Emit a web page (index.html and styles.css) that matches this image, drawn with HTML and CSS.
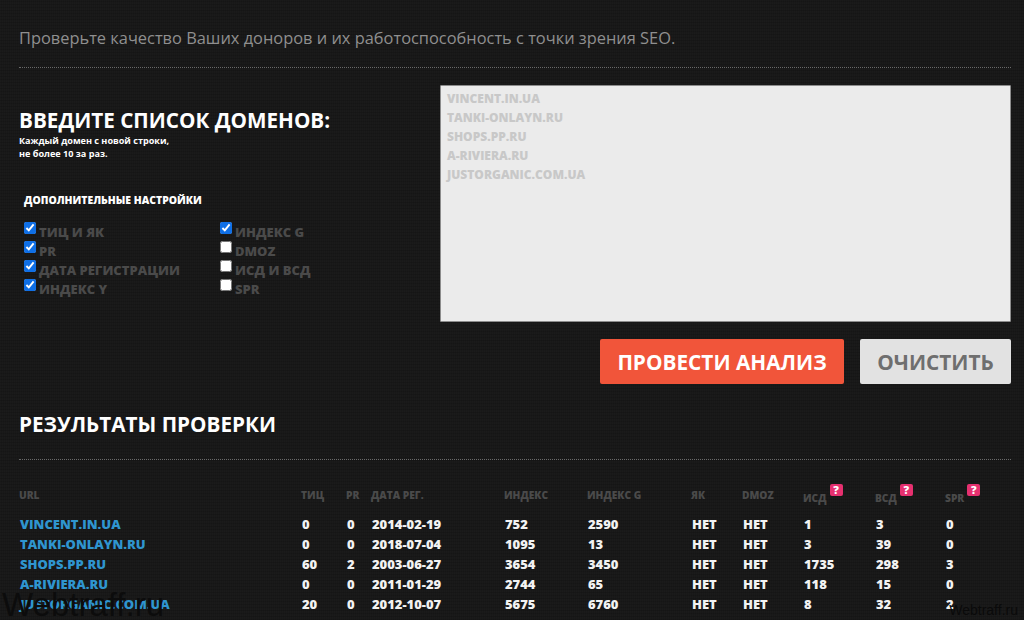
FILE: index.html
```html
<!DOCTYPE html>
<html lang="ru">
<head>
<meta charset="utf-8">
<title>Проверка доноров</title>
<link rel="stylesheet" href="styles.css">
</head>
<body>
<main class="page">
  <p class="lead">Проверьте качество Ваших доноров и их работоспособность с точки зрения SEO.</p>
  <section class="form">
    <div class="options">
      <h2 class="title">ВВЕДИТЕ СПИСОК ДОМЕНОВ:</h2>
      <p class="hint">Каждый домен с новой строки,<br>не более 10 за раз.</p>
      <h3 class="subtitle">ДОПОЛНИТЕЛЬНЫЕ НАСТРОЙКИ</h3>
      <div class="checks">
        <label class="check"><input type="checkbox" checked>ТИЦ И ЯК</label>
        <label class="check"><input type="checkbox" checked>ИНДЕКС G</label>
        <label class="check"><input type="checkbox" checked>PR</label>
        <label class="check"><input type="checkbox">DMOZ</label>
        <label class="check"><input type="checkbox" checked>ДАТА РЕГИСТРАЦИИ</label>
        <label class="check"><input type="checkbox">ИСД И ВСД</label>
        <label class="check"><input type="checkbox" checked>ИНДЕКС Y</label>
        <label class="check"><input type="checkbox">SPR</label>
      </div>
    </div>
    <div class="entry">
      <textarea class="domains" placeholder="VINCENT.IN.UA&#10;TANKI-ONLAYN.RU&#10;SHOPS.PP.RU&#10;A-RIVIERA.RU&#10;JUSTORGANIC.COM.UA"></textarea>
      <div class="actions">
        <button class="btn btn-go" type="button">ПРОВЕСТИ АНАЛИЗ</button>
        <button class="btn btn-clear" type="button">ОЧИСТИТЬ</button>
      </div>
    </div>
  </section>
  <h2 class="results-title">РЕЗУЛЬТАТЫ ПРОВЕРКИ</h2>
  <table class="results">
    <colgroup>
      <col class="c-url"><col class="c-tic"><col class="c-pr"><col class="c-date"><col class="c-iy"><col class="c-ig"><col class="c-ya"><col class="c-dm"><col class="c-isd"><col class="c-vsd"><col class="c-spr">
    </colgroup>
    <thead>
      <tr>
        <th>URL</th><th>ТИЦ</th><th>PR</th><th>ДАТА РЕГ.</th><th>ИНДЕКС</th><th>ИНДЕКС G</th><th>ЯК</th><th>DMOZ</th>
        <th class="low">ИСД<span class="q">?</span></th>
        <th class="low">ВСД<span class="q">?</span></th>
        <th class="low">SPR<span class="q">?</span></th>
      </tr>
    </thead>
    <tbody>
      <tr><td><a href="#">VINCENT.IN.UA</a></td><td>0</td><td>0</td><td>2014-02-19</td><td>752</td><td>2590</td><td>НЕТ</td><td>НЕТ</td><td>1</td><td>3</td><td>0</td></tr>
      <tr><td><a href="#">TANKI-ONLAYN.RU</a></td><td>0</td><td>0</td><td>2018-07-04</td><td>1095</td><td>13</td><td>НЕТ</td><td>НЕТ</td><td>3</td><td>39</td><td>0</td></tr>
      <tr><td><a href="#">SHOPS.PP.RU</a></td><td>60</td><td>2</td><td>2003-06-27</td><td>3654</td><td>3450</td><td>НЕТ</td><td>НЕТ</td><td>1735</td><td>298</td><td>3</td></tr>
      <tr><td><a href="#">A-RIVIERA.RU</a></td><td>0</td><td>0</td><td>2011-01-29</td><td>2744</td><td>65</td><td>НЕТ</td><td>НЕТ</td><td>118</td><td>15</td><td>0</td></tr>
      <tr><td><a href="#">JUSTORGANIC.COM.UA</a></td><td>20</td><td>0</td><td>2012-10-07</td><td>5675</td><td>6760</td><td>НЕТ</td><td>НЕТ</td><td>8</td><td>32</td><td>2</td></tr>
    </tbody>
  </table>
</main>
<div class="mark-left">Webtraff.ru</div>
<div class="mark-right">Webtraff.ru</div>
</body>
</html>
```

FILE: styles.css
```css
html, body {
  margin: 0;
  height: 620px;
  overflow: hidden;
}
body {
  position: relative;
  font-family: "Open Sans", sans-serif;
  color: #fff;
  background-color: #181818;
  background-image:
    repeating-linear-gradient(0deg, rgba(0,0,0,.12) 0 1px, transparent 1px 3px),
    repeating-linear-gradient(90deg, rgba(255,255,255,.012) 0 1px, transparent 1px 2px);
}
.page {
  padding: 0 13px 0 19px;
}
.lead {
  margin: 0;
  padding: 27px 0 18px;
  height: 22px;
  line-height: 22px;
  font-size: 16.4px;
  color: #8f8f8f;
  border-bottom: 1px dotted #6a6a6a;
}
.form {
  display: flex;
  justify-content: space-between;
  padding-top: 17px;
}
.options {
  width: 421px;
  padding-top: 21px;
}
.title {
  margin: 0;
  font-size: 20.7px;
  line-height: 28px;
  font-weight: 700;
}
.hint {
  margin: 0;
  font-size: 9.1px;
  line-height: 13px;
  font-weight: 700;
}
.subtitle {
  margin: 32px 0 0 5px;
  font-size: 10.4px;
  line-height: 16px;
  font-weight: 800;
}
.checks {
  display: grid;
  grid-template-columns: 196px 1fr;
  grid-auto-rows: 19px;
  margin: 13px 0 0 5px;
}
.check {
  display: flex;
  align-items: flex-start;
  font-size: 13px;
  line-height: 19px;
  font-weight: 800;
  color: #4a4a4a;
  padding-top: 2px;
  height: 17px;
}
.check input {
  margin: -1px 3px 0 0;
  width: 12px;
  height: 12px;
  flex: none;
  accent-color: #0f6fe6;
}
.entry {
  width: 571px;
  display: flex;
  flex-direction: column;
}
.domains {
  display: block;
  box-sizing: border-box;
  width: 571px;
  height: 237px;
  margin: 0;
  padding: 3px 6px;
  background: #ebebeb;
  border: 1px solid #8c8c8c;
  border-radius: 1px;
  font-family: "Open Sans", sans-serif;
  font-size: 12px;
  line-height: 19px;
  font-weight: 800;
  resize: none;
  outline: none;
}
.domains::placeholder {
  color: #c8c8c8;
  opacity: 1;
}
.actions {
  display: flex;
  justify-content: flex-end;
  gap: 16px;
  margin-top: 17px;
}
.btn {
  height: 45px;
  padding: 0;
  border: 0;
  border-radius: 2px;
  font-family: "Open Sans", sans-serif;
  font-size: 20.8px;
  font-weight: 700;
}
.btn-go {
  width: 244px;
  background: #f1553a;
  color: #fff;
}
.btn-clear {
  width: 151px;
  background: #e2e2e2;
  color: #6f6f6f;
}
.results-title {
  margin: 0;
  padding-top: 26px;
  height: 28px;
  padding-bottom: 21px;
  font-size: 20.7px;
  line-height: 28px;
  font-weight: 700;
  border-bottom: 1px dotted #6a6a6a;
}
.results {
  border-collapse: collapse;
  table-layout: fixed;
  width: 992px;
  margin-top: 25px;
}
.c-url { width: 282px; }
.c-tic { width: 45px; }
.c-pr { width: 25px; }
.c-date { width: 133px; }
.c-iy { width: 83px; }
.c-ig { width: 104px; }
.c-ya { width: 51px; }
.c-dm { width: 61px; }
.c-isd { width: 72px; }
.c-vsd { width: 70px; }
.c-spr { width: 66px; }
.results thead tr {
  height: 29px;
}
.results th {
  padding: 0 0 9px;
  text-align: left;
  font-size: 10.2px;
  font-weight: 800;
  color: #4a4a4a;
  white-space: nowrap;
  vertical-align: middle;
}
.results th.low {
  padding-bottom: 4px;
}
.results td {
  padding: 0 0 0 1px;
  height: 20px;
  font-size: 13px;
  line-height: 20px;
  font-weight: 800;
  color: #f2f2f2;
  white-space: nowrap;
}
.results a {
  color: #2f95cf;
  text-decoration: none;
}
.q {
  display: inline-block;
  position: relative;
  top: -8px;
  width: 13px;
  height: 12px;
  margin-left: 3px;
  background: #e6306f;
  border-radius: 2px;
  color: #fff;
  font-size: 11px;
  line-height: 12px;
  text-align: center;
}
.mark-left {
  position: absolute;
  left: 2px;
  top: 590px;
  font-family: "Liberation Sans", sans-serif;
  font-size: 33px;
  line-height: 30px;
  color: #0c0c0c;
}
.mark-right {
  position: absolute;
  right: 6px;
  top: 602px;
  font-family: "Liberation Sans", sans-serif;
  font-size: 14px;
  line-height: 16px;
  color: #0a0a0a;
}
```
